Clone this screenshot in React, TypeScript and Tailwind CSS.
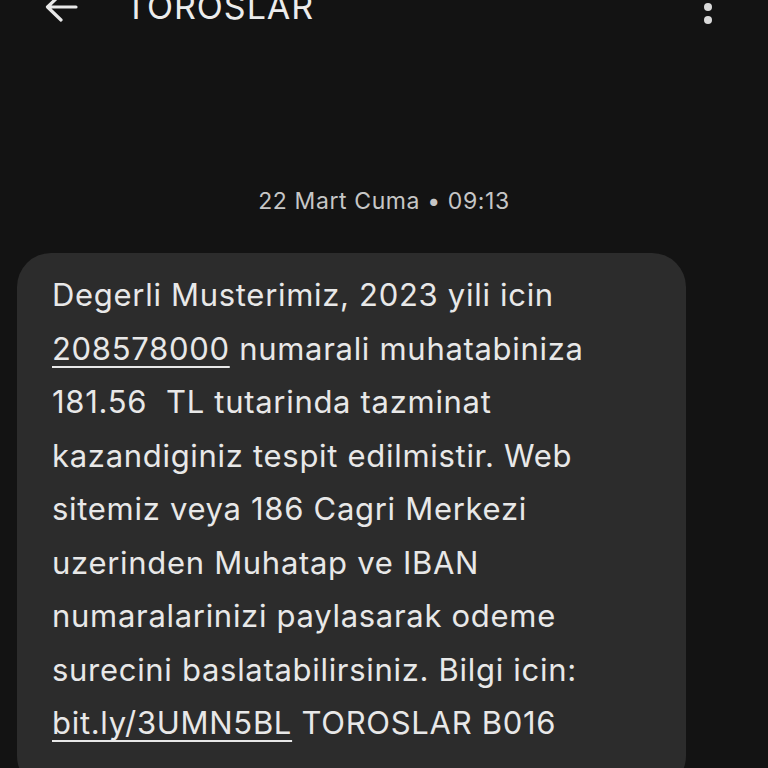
import React from "react";

export default function App() {
  const font = { fontFamily: "Inter, 'Noto Sans', sans-serif" };
  return (
    <div className="w-[768px] h-[768px] overflow-hidden bg-[#131313] text-[#e6e6e6]" style={font}>
      <div className="-mt-[21px] h-[56px] flex items-center pl-[44px] pr-[56px]">
        <svg width="34" height="32" viewBox="0 0 34 32" className="shrink-0">
          <path d="M32 16H4M17 3L3.5 16L17 29" stroke="#e8e8e8" strokeWidth="3.2" fill="none" strokeLinecap="round" strokeLinejoin="round" />
        </svg>
        <div className="ml-[47px] text-[34px] tracking-[1px] text-[#ececec] leading-none">TOROSLAR</div>
        <div className="ml-auto flex flex-col items-center gap-[5px]">
          <span className="block w-[8px] h-[8px] rounded-full bg-[#d9d9d9]" />
          <span className="block w-[8px] h-[8px] rounded-full bg-[#d9d9d9]" />
          <span className="block w-[8px] h-[8px] rounded-full bg-[#d9d9d9]" />
        </div>
      </div>
      <div className="mt-[151px] text-center text-[23px] tracking-[0.6px] text-[#c6c6c6] leading-[30px]">22 Mart Cuma • 09:13</div>
      <div className="mt-[37px] ml-[17px] w-[669px] rounded-[34px] bg-[#2c2c2c] pl-[35px] pt-[15px] pb-[40px] text-[31px] tracking-[0.7px] leading-[53.5px] text-[#e8e8e8] whitespace-pre">
        Degerli Musterimiz, 2023 yili icin
        <br />
        <span className="underline decoration-2 underline-offset-[6px]">208578000</span> numarali muhatabiniza
        <br />
        {"181.56  TL tutarinda tazminat"}
        <br />
        kazandiginiz tespit edilmistir. Web
        <br />
        sitemiz veya 186 Cagri Merkezi
        <br />
        uzerinden Muhatap ve IBAN
        <br />
        numaralarinizi paylasarak odeme
        <br />
        surecini baslatabilirsiniz. Bilgi icin:
        <br />
        <span className="underline decoration-2 underline-offset-[6px]">bit.ly/3UMN5BL</span> TOROSLAR B016
      </div>
    </div>
  );
}
